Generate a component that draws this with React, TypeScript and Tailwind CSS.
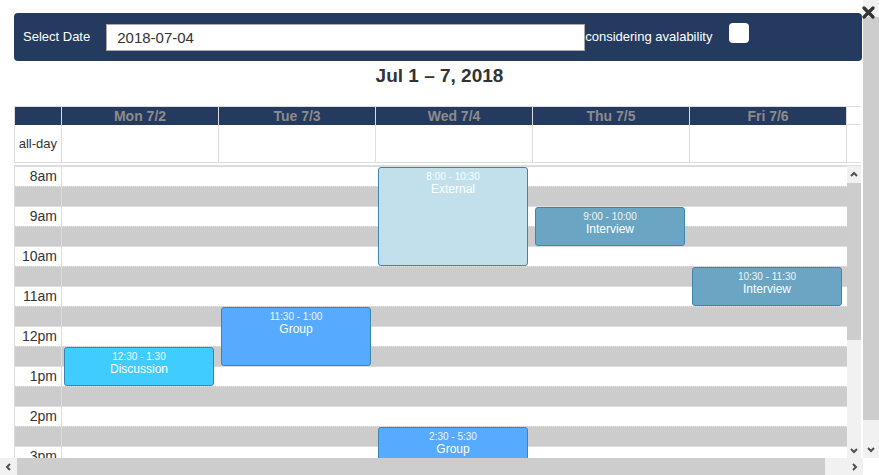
import React from "react";

type CalEvent = {
  day: number;
  start: number;
  end: number;
  time: string;
  title: string;
  color: string;
};

const days = ["Mon 7/2", "Tue 7/3", "Wed 7/4", "Thu 7/5", "Fri 7/6"];

const hours = ["8am", "9am", "10am", "11am", "12pm", "1pm", "2pm", "3pm"];

const events: CalEvent[] = [
  { day: 2, start: 8, end: 10.5, time: "8:00 - 10:30", title: "External", color: "bg-[#c1e0ec]" },
  { day: 3, start: 9, end: 10, time: "9:00 - 10:00", title: "Interview", color: "bg-[#6aa5c4]" },
  { day: 4, start: 10.5, end: 11.5, time: "10:30 - 11:30", title: "Interview", color: "bg-[#6aa5c4]" },
  { day: 1, start: 11.5, end: 13, time: "11:30 - 1:00", title: "Group", color: "bg-[#56aaff]" },
  { day: 0, start: 12.5, end: 13.5, time: "12:30 - 1:30", title: "Discussion", color: "bg-[#40ccff]" },
  { day: 2, start: 14.5, end: 17.5, time: "2:30 - 5:30", title: "Group", color: "bg-[#56aaff]" },
];

const HOUR = 40;

function Chevron({ dir }: { dir: "up" | "down" | "left" | "right" }) {
  const d = {
    up: "M1 5 L4 2 L7 5",
    down: "M1 2 L4 5 L7 2",
    left: "M5 1 L2 4 L5 7",
    right: "M2 1 L5 4 L2 7",
  }[dir];
  const w = dir === "up" || dir === "down" ? 8 : 7;
  const h = dir === "up" || dir === "down" ? 7 : 8;
  return (
    <svg width={w} height={h} viewBox={`0 0 ${w} ${h}`} aria-hidden="true">
      <path d={d} fill="none" stroke="#505050" strokeWidth="2" />
    </svg>
  );
}

function EventBox({ ev }: { ev: CalEvent }) {
  return (
    <div
      className={`absolute left-[2px] w-[150px] overflow-hidden rounded-[3px] border border-[#3a87ad] text-center text-white ${ev.color}`}
      style={{
        top: (ev.start - 8) * HOUR + 1,
        height: (ev.end - ev.start) * HOUR - 1,
      }}
    >
      <div className="pt-[3px] text-[10px] leading-[12px] text-white/90">
        {ev.time}
      </div>
      <div className="text-[12px] leading-[12px]">{ev.title}</div>
    </div>
  );
}

export default function App() {
  return (
    <div className="relative flex h-[475px] w-[879px] flex-col overflow-hidden bg-white font-['Liberation_Sans',Arial,sans-serif] text-[#333]">
      <div className="flex h-[458px]">
        <div className="flex w-[863px] flex-col overflow-hidden pt-[13px]">
          {/* filter bar */}
          <div className="ml-[14px] mr-[1px] flex h-[48px] items-center rounded-[4px] bg-[#243a5e] pl-[9px] text-[13px] text-white">
            <span>Select Date</span>
            <input
              readOnly
              defaultValue="2018-07-04"
              className="ml-[16px] h-[27px] w-[479px] border border-[#a9a9a9] bg-white pl-[10px] text-[15px] text-[#333] outline-none"
            />
            <span>considering avalability</span>
            <div className="ml-[17px] mb-[8px] h-[20px] w-[20px] rounded-[4px] bg-white" />
          </div>

          <div className="h-[45px] pl-[16px] pt-[4px] text-center text-[19px] font-bold leading-[22px] text-[#333]">
            Jul 1 – 7, 2018
          </div>

          {/* calendar */}
          <div className="ml-[14px] flex w-[847px] flex-col">
            <div className="flex h-[19px] border-t border-[#ddd]">
              <div className="w-[48px] border-l border-r border-[#ddd] bg-[#243a5e]" />
              {days.map((d) => (
                <div
                  key={d}
                  className="w-[157px] border-r border-[#ddd] bg-[#243a5e] text-center text-[14px] font-bold leading-[18px] text-[#8c8c8c]"
                >
                  {d}
                </div>
              ))}
              <div className="flex-1 border-b border-[#ddd]" />
            </div>

            <div className="flex h-[38px] border-b border-[#ddd]">
              <div className="flex w-[48px] items-center justify-end border-l border-r border-[#ddd] pr-[4px] text-[13px]">
                all-day
              </div>
              {days.map((d) => (
                <div key={d} className="w-[157px] border-r border-[#ddd]" />
              ))}
              <div className="flex-1" />
            </div>

            <div className="h-[3px] border-b border-[#ddd] bg-white" />

            <div className="flex h-[292px]">
              <div className="relative w-[833px] overflow-hidden">
                {hours.map((h) => (
                  <div key={h}>
                    <div className="flex h-[20px] border-t border-[#ddd] bg-white">
                      <div className="w-[48px] border-l border-r border-[#ddd] pr-[4px] text-right text-[14px] leading-[19px]">
                        {h}
                      </div>
                    </div>
                    <div className="flex h-[20px] border-t border-dotted border-[#e4e4e4] bg-[#cccccc]">
                      <div className="w-[48px] border-l border-r border-[#ddd]" />
                    </div>
                  </div>
                ))}

                <div className="absolute inset-0 flex pl-[48px]">
                  {days.map((d, i) => (
                    <div key={d} className="relative h-full w-[157px]">
                      {events
                        .filter((e) => e.day === i)
                        .map((e) => (
                          <EventBox key={e.time} ev={e} />
                        ))}
                    </div>
                  ))}
                </div>
              </div>

              {/* inner scrollbar */}
              <div className="flex w-[14px] flex-col bg-[#f1f1f1]">
                <div className="flex h-[17px] items-center justify-center">
                  <Chevron dir="up" />
                </div>
                <div className="h-[157px] bg-[#cdcdcd]" />
                <div className="flex-1" />
                <div className="flex h-[15px] items-center justify-center">
                  <Chevron dir="down" />
                </div>
              </div>
            </div>
          </div>
        </div>

        {/* outer vertical scrollbar */}
        <div className="flex w-[16px] flex-col bg-[#f1f1f1]">
          <div className="h-[17px]" />
          <div className="h-[403px] bg-[#cdcdcd]" />
          <div className="flex-1" />
          <div className="flex h-[18px] items-center justify-center">
            <Chevron dir="down" />
          </div>
        </div>
      </div>

      {/* outer horizontal scrollbar */}
      <div className="flex h-[17px] bg-[#f1f1f1]">
        <div className="flex w-[17px] items-center justify-center">
          <Chevron dir="left" />
        </div>
        <div className="w-[808px] bg-[#cdcdcd]" />
        <div className="flex-1" />
        <div className="flex w-[17px] items-center justify-center">
          <Chevron dir="right" />
        </div>
        <div className="w-[16px] bg-white" />
      </div>

      {/* close button */}
      <div className="absolute right-[4px] top-[6px]">
        <svg width="13" height="13" viewBox="0 0 13 13" aria-hidden="true">
          <path d="M2 2 L11 11 M11 2 L2 11" stroke="#333" strokeWidth="3.2" strokeLinecap="round" />
        </svg>
      </div>
    </div>
  );
}
